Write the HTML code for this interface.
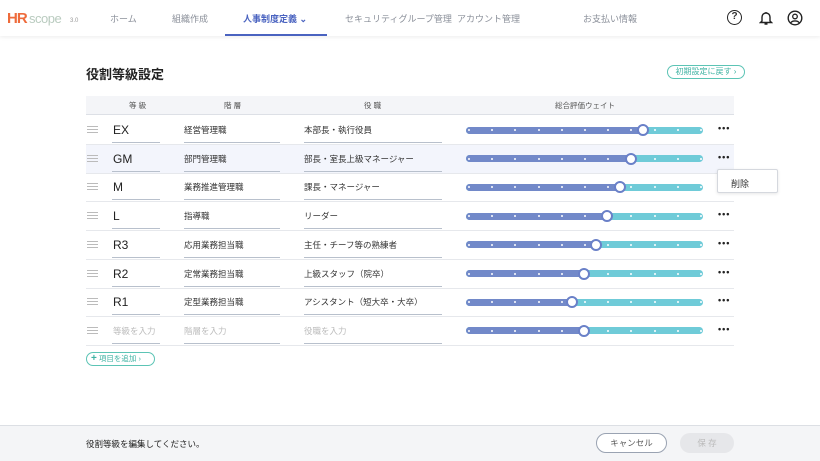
<!DOCTYPE html>
<html><head><meta charset="utf-8"><style>
*{box-sizing:border-box;margin:0;padding:0}
body{width:820px;height:461px;overflow:hidden;background:#fff;font-family:"Liberation Sans","Noto Sans CJK JP",sans-serif;position:relative;color:#333}
.abs{position:absolute}
.nav{position:absolute;left:0;top:0;width:820px;height:36px;background:#fff;box-shadow:0 1px 4px rgba(0,0,0,.08)}
.nav span{position:absolute;top:12px;font-size:9px;color:#8a8f99;white-space:nowrap}
.t{font-size:9px;color:#333;position:absolute;white-space:nowrap}
.u{position:absolute;height:1px;background:#b8c0cc}
.rowline{position:absolute;left:86px;width:648px;height:1px;background:#e6e8ec}
.drag{position:absolute;left:87px;width:11px;height:7px;border-top:1px solid #bbb;border-bottom:1px solid #bbb}
.drag:after{content:"";position:absolute;left:0;top:2px;width:11px;height:1px;background:#bbb}
.trk{position:absolute;left:466px;width:237px;height:7px;border-radius:4px;background:#6fcbd8;overflow:hidden}
.trk .f{position:absolute;left:0;top:0;height:7px;background:#7289c9}
.dot{position:absolute;top:2.5px;width:2px;height:2px;border-radius:1px;background:#fff}
.th{position:absolute;width:12px;height:12px;border-radius:6px;background:#fff;border:2px solid #6a80c8}
.more{position:absolute;left:718px;font-size:9px;font-weight:bold;letter-spacing:1px;color:#222}
</style></head><body>
<div class="nav">
<div class="abs" style="left:7px;top:10px;font-size:15px;font-weight:bold;color:#ee6b3b;letter-spacing:-1px">HR</div>
<div class="abs" style="left:29px;top:11px;font-size:13px;color:#b9cbbf;letter-spacing:-0.5px">scope</div>
<div class="abs" style="left:70px;top:18px;font-size:6px;color:#999">3.0</div>
<span style="left:110px">ホーム</span>
<span style="left:172px">組織作成</span>
<span style="left:243px;color:#4a63c0;font-weight:bold">人事制度定義 ⌄</span>
<div class="abs" style="left:225px;top:34px;width:102px;height:2px;background:#4a63c0"></div>
<span style="left:345px">セキュリティグループ管理</span>
<span style="left:457px">アカウント管理</span>
<span style="left:583px">お支払い情報</span>
<div class="abs" style="left:727px;top:10px;width:15px;height:15px;border:1.5px solid #222;border-radius:50%;font-size:10px;font-weight:bold;text-align:center;line-height:12px">?</div>
<svg class="abs" style="left:759px;top:10px" width="14" height="16" viewBox="0 0 14 16"><path d="M3 11V7a4 4 0 0 1 8 0v4l1.5 1.5h-11z M7 2v1 M5.5 14h3" fill="none" stroke="#222" stroke-width="1.4"/></svg>
<svg class="abs" style="left:787px;top:10px" width="16" height="16" viewBox="0 0 16 16"><circle cx="8" cy="8" r="6.8" fill="none" stroke="#222" stroke-width="1.4"/><circle cx="8" cy="6.5" r="2.3" fill="none" stroke="#222" stroke-width="1.3"/><path d="M3.8 12.8c1.5-2.5 6.9-2.5 8.4 0" fill="none" stroke="#222" stroke-width="1.3"/></svg>
</div>
<div class="abs" style="left:86px;top:64px;font-size:13px;font-weight:bold;color:#222">役割等級設定</div>
<div class="abs" style="left:667px;top:65px;width:78px;height:14px;border:1px solid #5cc4b5;border-radius:8px;font-size:8px;color:#3fb3a3;text-align:center;line-height:12px">初期設定に戻す ›</div>
<div class="abs" style="left:86px;top:96px;width:648px;height:19px;background:#f4f5f8;border-bottom:1px solid #dde0e6"></div>
<div class="t" style="left:129px;top:100px;font-size:7.5px;color:#555">等 級</div>
<div class="t" style="left:224px;top:100px;font-size:7.5px;color:#555">階 層</div>
<div class="t" style="left:364px;top:100px;font-size:7.5px;color:#555">役 職</div>
<div class="t" style="left:555px;top:100px;font-size:7.5px;color:#555">総合評価ウェイト</div>
<div class="abs" style="left:86px;top:144px;width:648px;height:29px;background:#f3f5fc"></div>
<div id="rows"></div>
<div class="abs" style="left:717px;top:169px;width:61px;height:24px;background:#fff;border:1px solid #d5d8de;border-radius:2px;box-shadow:0 1px 3px rgba(0,0,0,.1);font-size:9px;padding:7px 0 0 13px">削除</div>
<div class="abs" style="left:86px;top:352px;width:69px;height:14px;border:1px solid #5cc4b5;border-radius:8px;font-size:7.5px;color:#3fb3a3;line-height:12px;padding-left:4px"><b style="font-size:10px">+</b> 項目を追加 ›</div>
<div class="abs" style="left:0;top:425px;width:820px;height:36px;background:#f4f5f7;border-top:1px solid #dcdfe4"></div>
<div class="abs" style="left:86px;top:438px;font-size:8.5px;color:#222">役割等級を編集してください。</div>
<div class="abs" style="left:596px;top:433px;width:71px;height:20px;border:1px solid #9aa3b2;border-radius:10px;background:#fff;font-size:8.5px;color:#555;text-align:center;line-height:18px">キャンセル</div>
<div class="abs" style="left:680px;top:433px;width:54px;height:20px;border-radius:10px;background:#e6e7ea;font-size:8.5px;color:#bbb;text-align:center;line-height:20px">保 存</div>
<script>
var d=[["EX","経営管理職","本部長・執行役員",643],["GM","部門管理職","部長・室長上級マネージャー",631],["M","業務推進管理職","課長・マネージャー",620],["L","指導職","リーダー",607],["R3","応用業務担当職","主任・チーフ等の熟練者",596],["R2","定常業務担当職","上級スタッフ（院卒）",584],["R1","定型業務担当職","アシスタント（短大卒・大卒）",572],["等級を入力","階層を入力","役職を入力",584]];
var h="";
d.forEach(function(r,i){var c=130+i*28.7;var ph=i==7;
h+='<div class="drag" style="top:'+(c-4)+'px"></div>';
h+='<div class="t" style="left:113px;top:'+(c-(ph?6:7))+'px;font-size:'+(ph?'8.5px;color:#bbb':'12px;color:#222')+'">'+r[0]+'</div>';
h+='<div class="t" style="left:184px;top:'+(c-6)+'px;font-size:8.5px;'+(ph?'color:#bbb':'')+'">'+r[1]+'</div>';
h+='<div class="t" style="left:304px;top:'+(c-6)+'px;font-size:8.5px;'+(ph?'color:#bbb':'')+'">'+r[2]+'</div>';
h+='<div class="u" style="left:112px;width:48px;top:'+(c+12)+'px"></div><div class="u" style="left:184px;width:96px;top:'+(c+12)+'px"></div><div class="u" style="left:304px;width:138px;top:'+(c+12)+'px"></div>';
h+='<div class="rowline" style="top:'+(c+14)+'px"></div>';
var t='<div class="trk" style="top:'+(c-3.5)+'px"><div class="f" style="width:'+(r[3]-466)+'px"></div>';
for(var k=0;k<11;k++)t+='<div class="dot" style="left:'+(2+k*23.2)+'px"></div>';
h+=t+'</div><div class="th" style="left:'+(r[3]-6)+'px;top:'+(c-6)+'px"></div>';
h+='<div class="more" style="top:'+(c-7)+'px">•••</div>';});
document.getElementById("rows").innerHTML=h;
</script>
</body></html>
